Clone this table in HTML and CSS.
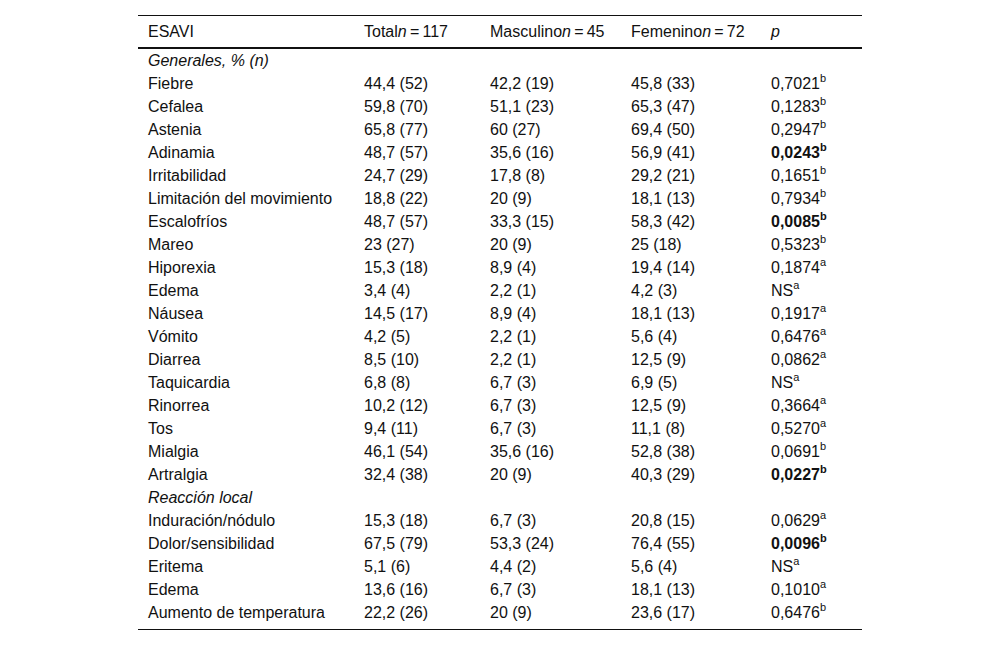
FILE: index.html
```html
<!DOCTYPE html>
<html lang="es">
<head>
<meta charset="utf-8">
<title>ESAVI</title>
<link rel="stylesheet" href="styles.css">
</head>
<body>
<div class="table-wrap">
<table class="esavi">
<colgroup>
<col class="c1"><col class="c2"><col class="c3"><col class="c4"><col class="c5">
</colgroup>
<thead>
<tr>
<th>ESAVI</th>
<th>Total<i>n</i>&#8201;=&#8201;117</th>
<th>Masculino<i>n</i>&#8201;=&#8201;45</th>
<th>Femenino<i>n</i>&#8201;=&#8201;72</th>
<th><i>p</i></th>
</tr>
</thead>
<tbody>
<tr><td class="sec" colspan="5">Generales, % (n)</td></tr>
<tr><td>Fiebre</td><td>44,4 (52)</td><td>42,2 (19)</td><td>45,8 (33)</td><td>0,7021<sup>b</sup></td></tr>
<tr><td>Cefalea</td><td>59,8 (70)</td><td>51,1 (23)</td><td>65,3 (47)</td><td>0,1283<sup>b</sup></td></tr>
<tr><td>Astenia</td><td>65,8 (77)</td><td>60 (27)</td><td>69,4 (50)</td><td>0,2947<sup>b</sup></td></tr>
<tr><td>Adinamia</td><td>48,7 (57)</td><td>35,6 (16)</td><td>56,9 (41)</td><td><b>0,0243<sup>b</sup></b></td></tr>
<tr><td>Irritabilidad</td><td>24,7 (29)</td><td>17,8 (8)</td><td>29,2 (21)</td><td>0,1651<sup>b</sup></td></tr>
<tr><td>Limitación del movimiento</td><td>18,8 (22)</td><td>20 (9)</td><td>18,1 (13)</td><td>0,7934<sup>b</sup></td></tr>
<tr><td>Escalofríos</td><td>48,7 (57)</td><td>33,3 (15)</td><td>58,3 (42)</td><td><b>0,0085<sup>b</sup></b></td></tr>
<tr><td>Mareo</td><td>23 (27)</td><td>20 (9)</td><td>25 (18)</td><td>0,5323<sup>b</sup></td></tr>
<tr><td>Hiporexia</td><td>15,3 (18)</td><td>8,9 (4)</td><td>19,4 (14)</td><td>0,1874<sup>a</sup></td></tr>
<tr><td>Edema</td><td>3,4 (4)</td><td>2,2 (1)</td><td>4,2 (3)</td><td>NS<sup>a</sup></td></tr>
<tr><td>Náusea</td><td>14,5 (17)</td><td>8,9 (4)</td><td>18,1 (13)</td><td>0,1917<sup>a</sup></td></tr>
<tr><td>Vómito</td><td>4,2 (5)</td><td>2,2 (1)</td><td>5,6 (4)</td><td>0,6476<sup>a</sup></td></tr>
<tr><td>Diarrea</td><td>8,5 (10)</td><td>2,2 (1)</td><td>12,5 (9)</td><td>0,0862<sup>a</sup></td></tr>
<tr><td>Taquicardia</td><td>6,8 (8)</td><td>6,7 (3)</td><td>6,9 (5)</td><td>NS<sup>a</sup></td></tr>
<tr><td>Rinorrea</td><td>10,2 (12)</td><td>6,7 (3)</td><td>12,5 (9)</td><td>0,3664<sup>a</sup></td></tr>
<tr><td>Tos</td><td>9,4 (11)</td><td>6,7 (3)</td><td>11,1 (8)</td><td>0,5270<sup>a</sup></td></tr>
<tr><td>Mialgia</td><td>46,1 (54)</td><td>35,6 (16)</td><td>52,8 (38)</td><td>0,0691<sup>b</sup></td></tr>
<tr><td>Artralgia</td><td>32,4 (38)</td><td>20 (9)</td><td>40,3 (29)</td><td><b>0,0227<sup>b</sup></b></td></tr>
<tr><td class="sec" colspan="5">Reacción local</td></tr>
<tr><td>Induración/nódulo</td><td>15,3 (18)</td><td>6,7 (3)</td><td>20,8 (15)</td><td>0,0629<sup>a</sup></td></tr>
<tr><td>Dolor/sensibilidad</td><td>67,5 (79)</td><td>53,3 (24)</td><td>76,4 (55)</td><td><b>0,0096<sup>b</sup></b></td></tr>
<tr><td>Eritema</td><td>5,1 (6)</td><td>4,4 (2)</td><td>5,6 (4)</td><td>NS<sup>a</sup></td></tr>
<tr><td>Edema</td><td>13,6 (16)</td><td>6,7 (3)</td><td>18,1 (13)</td><td>0,1010<sup>a</sup></td></tr>
<tr><td>Aumento de temperatura</td><td>22,2 (26)</td><td>20 (9)</td><td>23,6 (17)</td><td>0,6476<sup>b</sup></td></tr>
</tbody>
</table>
</div>
</body>
</html>
```

FILE: styles.css
```css
html, body {
  margin: 0;
  padding: 0;
  background: #ffffff;
}

body {
  font-family: "Liberation Sans", Arial, sans-serif;
  font-size: 16px;
  color: #111111;
}

.table-wrap {
  width: 724px;
  margin: 15px auto 0;
  border-top: 1px solid #111111;
  border-bottom: 1px solid #111111;
  padding-bottom: 5px;
}

.esavi {
  width: 100%;
  border-collapse: collapse;
  table-layout: fixed;
}

.c1 { width: 216px; }
.c2 { width: 126px; }
.c3 { width: 141px; }
.c4 { width: 140px; }
.c5 { width: 101px; }

.esavi th {
  font-weight: normal;
  text-align: left;
  padding: 6px 10px;
  line-height: 19px;
  border-bottom: 2px solid #111111;
  white-space: nowrap;
}

.esavi td {
  text-align: left;
  padding: 2px 10px;
  line-height: 19px;
  white-space: nowrap;
  vertical-align: middle;
}

.esavi td.sec {
  font-style: italic;
}

.esavi sup {
  font-size: 11px;
  line-height: 0;
  vertical-align: 7px;
}
```
